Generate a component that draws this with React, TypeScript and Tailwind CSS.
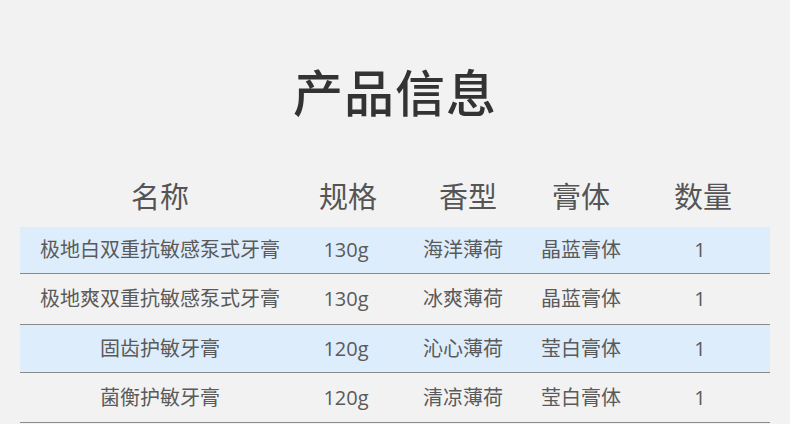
const rows = [
  { name: '极地白双重抗敏感泵式牙膏', spec: '130g', flavor: '海洋薄荷', paste: '晶蓝膏体', qty: '1', blue: true, h: 'h-[47px]' },
  { name: '极地爽双重抗敏感泵式牙膏', spec: '130g', flavor: '冰爽薄荷', paste: '晶蓝膏体', qty: '1', blue: false, h: 'h-[51px]' },
  { name: '固齿护敏牙膏', spec: '120g', flavor: '沁心薄荷', paste: '莹白膏体', qty: '1', blue: true, h: 'h-[48px]' },
  { name: '菌衡护敏牙膏', spec: '120g', flavor: '清凉薄荷', paste: '莹白膏体', qty: '1', blue: false, h: 'h-[50px]' },
]

const headers = ['名称', '规格', '香型', '膏体', '数量']

export default function App() {
  return (
    <div className="w-[790px] h-[424px] overflow-hidden bg-[#f2f2f2] font-['Noto_Sans_CJK_SC',sans-serif]">
      <div className="ml-[50px] w-[240px] h-[22px] border border-t-0 border-[#f0f0f0]"/>
      <h1 className="mt-[38px] h-[60px] leading-[60px] text-center text-[50px] font-medium text-[#333333] tracking-[1px]">
        产品信息
      </h1>
      <div className="mt-[55px] mx-[20px] h-[40px] grid grid-cols-[280px_92px_142px_94px_142px] items-center">
        {headers.map((h, i) => (
          <div key={i} className={"text-center text-[29px] leading-[40px] text-[#555555] " + (i === 1 ? 'pl-[4px]' : i === 2 ? 'pl-[10px]' : i === 4 ? 'pl-[8px]' : '')}>
            {h}
          </div>
        ))}
      </div>
      <div className="mt-[12px] mx-[20px] flex flex-col font-['Open_Sans','Noto_Sans_CJK_SC',sans-serif]">
        {rows.map((r, i) => (
          <div key={i}
               className={"grid grid-cols-[280px_92px_142px_94px_142px] items-center border-b border-[#8a8a8a] text-[20px] text-[#5a5a5a] " + r.h + (r.blue ? ' bg-[#deedfc]' : '')}>
            <div className="text-center">{r.name}</div>
            <div className="text-center">{r.spec}</div>
            <div className="text-center">{r.flavor}</div>
            <div className="text-center">{r.paste}</div>
            <div className="text-center pl-[2px]">{r.qty}</div>
          </div>
        ))}
      </div>
    </div>
  )
}
